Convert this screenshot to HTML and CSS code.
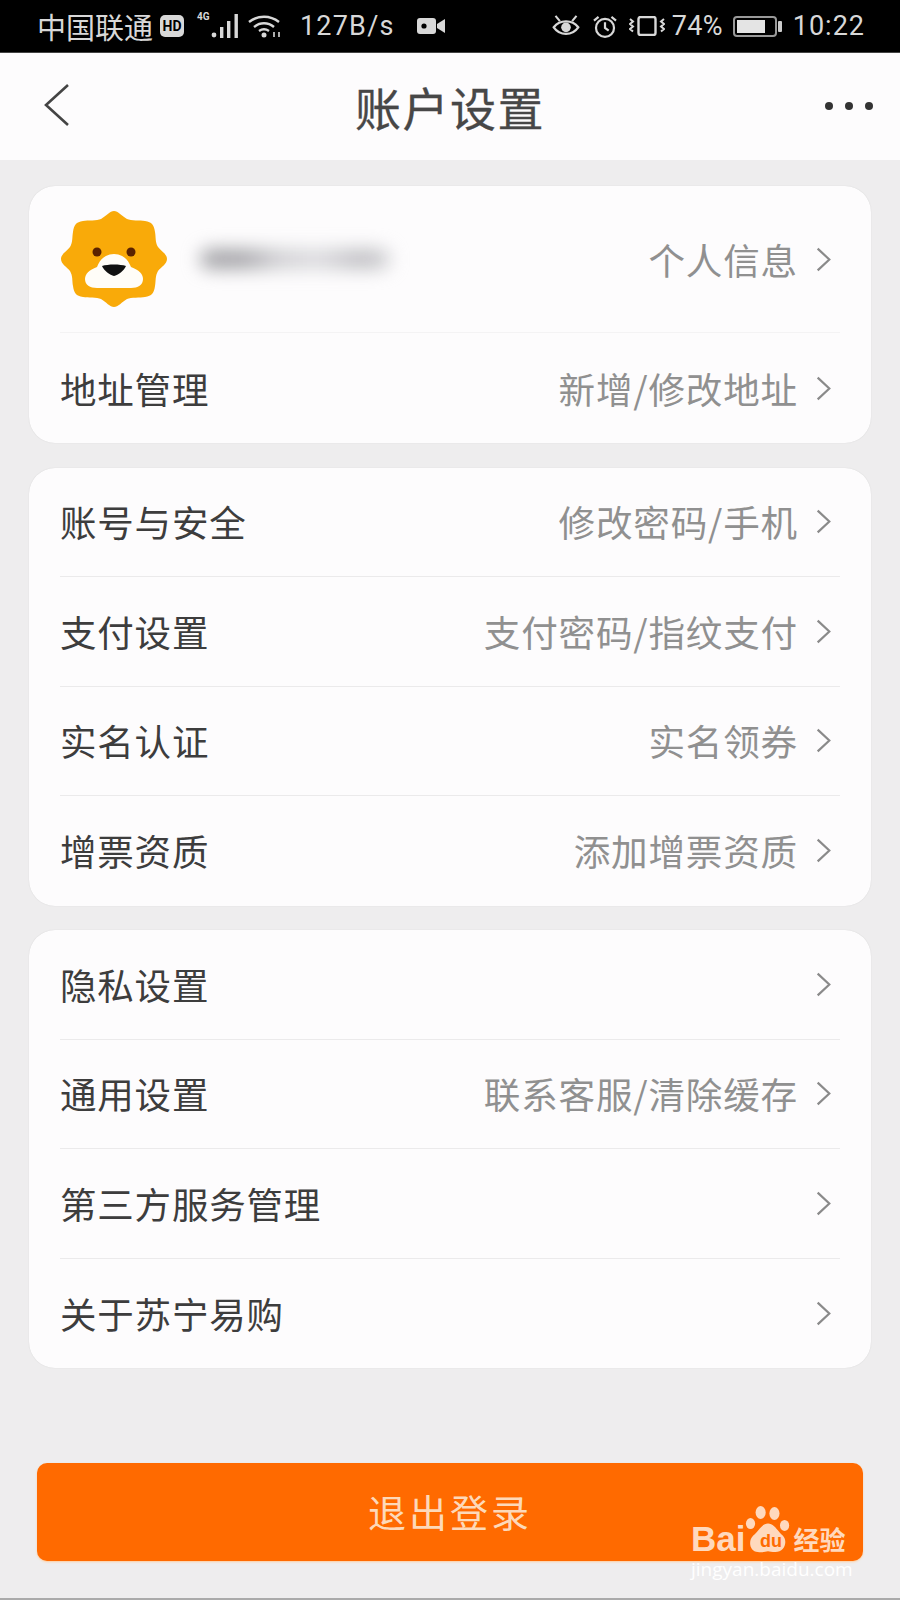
FILE: index.html
```html
<!DOCTYPE html>
<html lang="zh">
<head>
<meta charset="utf-8">
<title>账户设置</title>
<link rel="stylesheet" href="styles.css">
</head>
<body>
<div class="page">
  <div class="status">
    <div class="status-side">
      <span class="carrier">中国联通</span>
      <span class="hd">HD</span>
      <span class="net"><span class="g4">4G</span>
        <svg width="28" height="24" viewBox="0 0 28 24"><g fill="#d8d8d8"><circle cx="3" cy="21" r="2.4"/><rect x="9" y="13" width="3.4" height="11"/><rect x="16" y="7" width="3.4" height="17"/><rect x="23.5" y="0" width="3.4" height="24"/></g></svg>
      </span>
      <svg class="wifi" width="34" height="23" viewBox="0 0 34 23" fill="none" stroke="#d8d8d8" stroke-width="2.4"><path d="M1 7C10 0 22 0 31 7"/><path d="M6 12C12 7 20 7 26 12"/><path d="M11 16C14 14 18 14 21 16"/><circle cx="16" cy="20" r="2.5" fill="#d8d8d8" stroke="none"/><path d="M26 22v-5M31 17v5" stroke-width="1.6"/></svg>
      <span class="speed">127B/s</span>
      <svg class="cam" width="28" height="16" viewBox="0 0 28 16"><rect x="0" y="0" width="19" height="16" rx="3" fill="#d8d8d8"/><circle cx="7" cy="8" r="2.6" fill="#000"/><path d="M20 6l8-5v14l-8-5z" fill="#d8d8d8"/></svg>
    </div>
    <div class="status-side">
      <svg class="eye" width="28" height="22" viewBox="0 0 32 25" fill="none" stroke="#d8d8d8" stroke-width="2.6"><path d="M2 14C9 5 23 5 30 14C23 24 9 24 2 14Z"/><circle cx="16" cy="14" r="5.5" fill="#d8d8d8" stroke="none"/><path d="M4 1l5 6M28 1l-5 6" stroke-width="2.4"/></svg>
      <svg class="alarm" width="26" height="23" viewBox="0 0 28 25" fill="none" stroke="#d8d8d8" stroke-width="2.4"><circle cx="14" cy="14" r="9.8"/><path d="M14 8v6l4 3"/><path d="M2 6l5-4M26 6l-5-4"/></svg>
      <svg class="vibrate" width="36" height="20" viewBox="0 0 36 20" fill="none" stroke="#d8d8d8" stroke-width="2"><rect x="9.5" y="1" width="17" height="18" rx="2" stroke-width="2.4"/><path d="M1 3l3 2.500-3 2.500 3 2.500-3 2.500 3 2.500M35 3l-3 2.500 3 2.500-3 2.500 3 2.500-3 2.500"/></svg>
      <span class="pct">74%</span>
      <span class="battery"><span class="battery-fill"></span></span><span class="battery-tip"></span>
      <span class="time">10:22</span>
    </div>
  </div>

  <header class="topbar">
    <svg class="back" width="28" height="44" viewBox="0 0 28 44" fill="none" stroke="#444" stroke-width="2.600"><path d="M25 2L3 22l22 20"/></svg>
    <h1 class="title">账户设置</h1>
    <div class="dots"><i></i><i></i><i></i></div>
  </header>

  <main class="content">
    <section class="card">
      <a class="row row-profile">
        <span class="profile">
          <svg class="avatar" width="108" height="98" viewBox="0 0 108 98">
            <path fill="#f9aa09" d="M54 1 C58 1 62 6 67 9 C71 11 80 10 85 11 C92 12 94 15 95 22 C96 27 95 32 98 37 C101 41 107 44 107 49 C107 54 101 57 98 61 C95 66 96 71 95 76 C94 83 92 86 85 87 C80 88 71 87 67 89 C62 92 58 97 54 97 C50 97 46 92 41 89 C37 87 28 88 23 87 C16 86 14 83 13 76 C12 71 13 66 10 61 C7 57 1 54 1 49 C1 44 7 41 10 37 C13 32 12 27 13 22 C14 15 16 12 23 11 C28 10 37 11 41 9 C46 6 50 1 54 1Z"/>
            <circle cx="37" cy="42" r="4.5" fill="#5a2200"/><circle cx="71" cy="42" r="4.5" fill="#5a2200"/>
            <path fill="#fffdf8" d="M54 44 C62 44 68 49 71 57 C79 60 83 64 83 69 C83 75 78 78 71 78 L37 78 C30 78 25 75 25 69 C25 64 29 60 37 57 C40 49 46 44 54 44Z"/>
            <path fill="#111" d="M42 56 C48 54 60 54 66 56 C64 61 58 65 54 66 C50 65 44 61 42 56Z"/>
          </svg>
          <span class="blur-name"></span>
        </span>
        <span class="hint">个人信息</span>
        <svg class="chev" viewBox="0 0 18 30"><path d="M2 2l14 13L2 28"/></svg>
      </a>
      <a class="row row-last row-addr"><span class="label">地址管理</span><span class="hint">新增/修改地址</span><svg class="chev" viewBox="0 0 18 30"><path d="M2 2l14 13L2 28"/></svg></a>
    </section>

    <section class="card">
      <a class="row"><span class="label">账号与安全</span><span class="hint">修改密码/手机</span><svg class="chev" viewBox="0 0 18 30"><path d="M2 2l14 13L2 28"/></svg></a>
      <a class="row"><span class="label">支付设置</span><span class="hint">支付密码/指纹支付</span><svg class="chev" viewBox="0 0 18 30"><path d="M2 2l14 13L2 28"/></svg></a>
      <a class="row"><span class="label">实名认证</span><span class="hint">实名领券</span><svg class="chev" viewBox="0 0 18 30"><path d="M2 2l14 13L2 28"/></svg></a>
      <a class="row row-last"><span class="label">增票资质</span><span class="hint">添加增票资质</span><svg class="chev" viewBox="0 0 18 30"><path d="M2 2l14 13L2 28"/></svg></a>
    </section>

    <section class="card">
      <a class="row"><span class="label">隐私设置</span><svg class="chev" viewBox="0 0 18 30"><path d="M2 2l14 13L2 28"/></svg></a>
      <a class="row"><span class="label">通用设置</span><span class="hint">联系客服/清除缓存</span><svg class="chev" viewBox="0 0 18 30"><path d="M2 2l14 13L2 28"/></svg></a>
      <a class="row"><span class="label">第三方服务管理</span><svg class="chev" viewBox="0 0 18 30"><path d="M2 2l14 13L2 28"/></svg></a>
      <a class="row row-last"><span class="label">关于苏宁易购</span><svg class="chev" viewBox="0 0 18 30"><path d="M2 2l14 13L2 28"/></svg></a>
    </section>
  </main>

  <button class="logout">退出登录</button>

  <div class="watermark">
    <div class="wm-logo">
      <span class="wm-bai">Bai</span>
      <svg class="wm-paw" width="46" height="50" viewBox="0 0 50 52"><g fill="#ffd9bd"><ellipse cx="17" cy="7" rx="5.500" ry="7"/><ellipse cx="32" cy="8" rx="5.500" ry="7"/><ellipse cx="6" cy="19" rx="5" ry="6"/><ellipse cx="43" cy="21" rx="5" ry="6"/><path d="M25 19C32 19 35 27 41 32C47 38 43 50 33 50C29 50 27 49 25 49C22 49 19 51 14 50C5 49 3 38 9 32C15 27 18 19 25 19Z"/></g></svg>
      <span class="wm-du">du</span>
      <span class="wm-cn">经验</span>
    </div>
    <div class="wm-url">jingyan.baidu.com</div>
  </div>
</div>
</body>
</html>
```

FILE: styles.css
```css
* { box-sizing: border-box; }
html, body { margin: 0; padding: 0; }
body {
  width: 900px;
  height: 1600px;
  background: #eeedee;
  font-family: "Noto Sans CJK SC", "Noto Sans", sans-serif;
  overflow: hidden;
}
.page {
  position: relative;
  height: 1600px;
  display: flex;
  flex-direction: column;
  border-bottom: 2px solid #aaa;
}

/* status bar */
.status {
  height: 53px;
  background: #000;
  color: #d8d8d8;
  display: flex;
  justify-content: space-between;
  align-items: center;
  padding: 0 35px 0 37px;
  flex: none;
  font-family: "Roboto", "Noto Sans CJK SC", sans-serif;
  font-size: 27px;
  border-bottom: 1px solid #444;
}
.status-side { display: flex; align-items: center; }
.carrier { font-family: "Noto Sans CJK SC", sans-serif; font-size: 29px; line-height: 36px; width: 116px; white-space: nowrap; letter-spacing: 0; }
.hd {
  width: 24px; height: 22px; margin-left: 7px;
  background: #d8d8d8; color: #000; border-radius: 5px;
  font: 700 14px/22px "Roboto", sans-serif; text-align: center;
}
.net { position: relative; display: flex; margin-left: 13px; width: 42px; height: 24px; }
.net svg { margin-left: 14px; }
.g4 { position: absolute; left: 0; top: -3px; font: 700 10px/12px "Roboto", sans-serif; }
.wifi { margin-left: 9px; }
.speed { margin-left: 18px; letter-spacing: 1.2px; }
.cam { margin-left: 22px; }
.alarm { margin-left: 12px; }
.vibrate { margin-left: 11px; }
.pct { margin-left: 7px; letter-spacing: 0.3px; }
.battery {
  margin-left: 10px; width: 44px; height: 21px;
  border: 2px solid #999; border-radius: 4px; padding: 2px;
  display: flex;
}
.battery-fill { width: 78%; background: #e4e4e4; }
.battery-tip { width: 4px; height: 11px; margin-left: 1px; background: #ccc; border-radius: 1px; }
.time { margin-left: 11px; letter-spacing: 1px; }

/* header */
.topbar {
  height: 107px;
  flex: none;
  background: #fdfcfd;
  display: flex;
  align-items: center;
  justify-content: space-between;
  padding: 0 27px 0 43px;
  position: relative;
}
.back { margin-top: -3px; }
.title {
  position: absolute;
  left: 0; right: 0; top: 0;
  margin: 0;
  text-align: center;
  font-weight: 400;
  font-size: 46px;
  line-height: 107px;
  letter-spacing: 1.5px;
  color: #474747;
  -webkit-text-stroke: 0.3px #474747;
}
.dots { display: flex; gap: 12px; margin-top: -1px; }
.dots i { width: 8px; height: 8px; border-radius: 50%; background: #333; display: block; }

/* cards */
.content {
  padding: 26px 29px 0;
  display: flex;
  flex-direction: column;
  gap: 24.5px;
  flex: none;
}
.card {
  background: #fdfcfd;
  border-radius: 26px;
  padding: 0 31px;
  box-shadow: 0 0 1px #c9c9c9;
}
.row {
  height: 109.5px;
  display: flex;
  align-items: center;
  border-bottom: 1px solid #ebeaeb;
}
.row-last { border-bottom: none; }
.row-profile { height: 147px; border-bottom-color: #f4f3f4; }
.row-addr { height: 110px; }
.label {
  font-size: 36.5px;
  letter-spacing: 0.8px;
  color: #3d3d3d;
  margin-right: auto;
}
.hint {
  font-size: 36.6px;
  letter-spacing: 0.8px;
  color: #909090;
  white-space: nowrap;
}
.chev {
  width: 15px;
  height: 29px;
  margin-left: 18px;
  margin-right: 9px;
  fill: none;
  stroke: #8a8a8a;
  stroke-width: 2.6;
  flex: none;
}
.profile { display: flex; align-items: center; margin-right: auto; }
.avatar { display: block; }
.blur-name {
  margin-left: 32px;
  width: 190px;
  height: 20px;
  border-radius: 10px;
  background: linear-gradient(90deg, #a3a3a7 0 22%, #cfcfd2 42%, #dadadd 62%, #bdbdc1 85%, #cfcfd2);
  filter: blur(9px);
}

/* logout */
.logout {
  position: absolute;
  left: 37px;
  top: 1463px;
  width: 826px;
  height: 98px;
  border: none;
  border-radius: 10px;
  background: #ff6a00;
  box-shadow: 0 1px 2px #ffcf9f;
  color: #fdd9b9;
  font-family: "Noto Sans CJK SC", sans-serif;
  font-size: 38px;
  letter-spacing: 3px;
  padding: 0 0 4px;
}

/* watermark */
.watermark {
  position: absolute;
  left: 691px;
  top: 1505px;
  width: 170px;
  color: #ffd9bd;
}
.wm-logo { display: flex; align-items: flex-end; height: 50px; position: relative; white-space: nowrap; }
.wm-bai {
  font: 700 35px/32px "Liberation Sans", sans-serif;
}
.wm-paw { flex: none; }
.wm-du {
  position: absolute;
  left: 65px;
  bottom: 4px;
  width: 30px;
  text-align: center;
  font: 700 18px/20px "Liberation Sans", sans-serif;
  color: #ff6a00;
}
.wm-cn {
  font: 700 26px/32px "Noto Sans CJK SC", sans-serif;
  margin-left: 2px;
}
.wm-url {
  font: 400 19px/24px "Open Sans", sans-serif;
  color: #fff;
  white-space: nowrap;
  margin-top: 2px;
}
```
